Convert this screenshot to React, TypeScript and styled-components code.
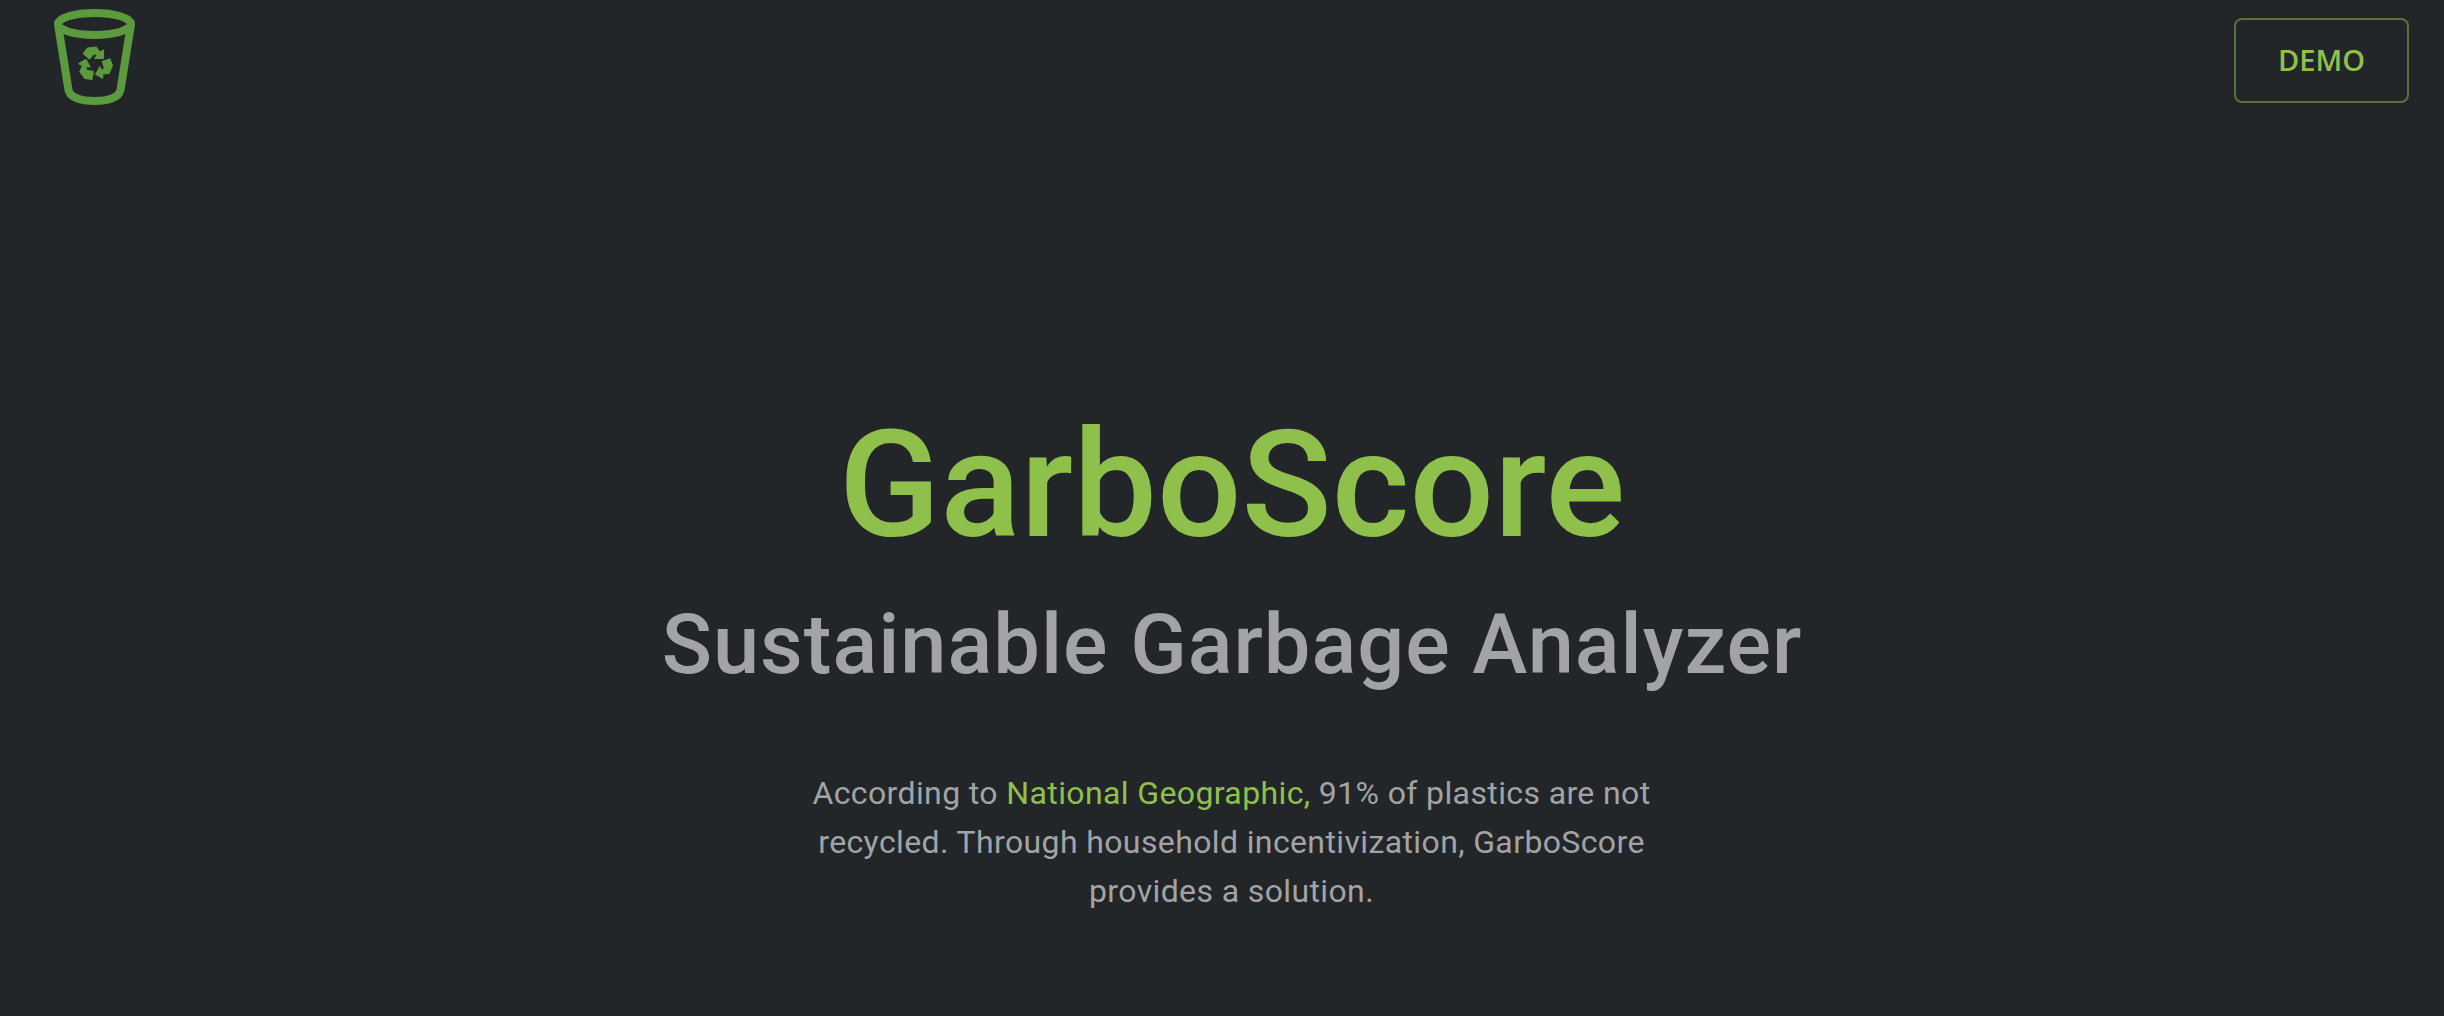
import React from 'react';
import styled, { createGlobalStyle } from 'styled-components';

const GlobalStyle = createGlobalStyle`
  html, body {
    margin: 0;
    padding: 0;
    height: 100%;
    overflow: hidden;
    background: #222629;
  }
`;

const ARROW_ANGLES = [0, 120, 240];

const RecycleBin = () => (
  <BinSvg viewBox="0 0 81 97" aria-hidden="true">
    <g fill="none" stroke="#5c9a3e" strokeWidth="8" strokeLinejoin="round">
      <ellipse cx="40.5" cy="16" rx="36.5" ry="11" />
      <path d="M4 16 L14.5 82 C16 90 28 93 40.5 93 C53 93 65 90 66.5 82 L77 16" />
    </g>
    <g fill="#5c9a3e" stroke="#5c9a3e" strokeWidth="1.3" strokeLinejoin="round" transform="translate(41 56) scale(1.05)">
      {ARROW_ANGLES.map((angle) => (
        <path
          key={angle}
          transform={`rotate(${angle})`}
          d="M-11 -10 L-7 -15 L1 -16 L4.5 -11 L8 -13 L8 -5.5 L0 -5.5 L2.5 -8.5 L-1 -10 L-5.5 -5 Z"
        />
      ))}
    </g>
  </BinSvg>
);

const App = () => (
  <Page>
    <GlobalStyle />
    <Header>
      <RecycleBin />
      <DemoButton>DEMO</DemoButton>
    </Header>
    <Hero>
      <Title>GarboScore</Title>
      <Subtitle>Sustainable Garbage Analyzer</Subtitle>
      <Intro>
        According to <Highlight>National Geographic,</Highlight> 91% of plastics are not recycled. Through household
        incentivization, GarboScore provides a solution.
      </Intro>
    </Hero>
  </Page>
);

const Page = styled.div`
  height: 1016px;
  background: #222629;
  font-family: Roboto, sans-serif;
  display: flex;
  flex-direction: column;
`;

const Header = styled.header`
  display: flex;
  justify-content: space-between;
  align-items: flex-start;
  padding: 8px 35px 0 54px;
`;

const BinSvg = styled.svg`
  width: 81px;
  height: 97px;
  display: block;
`;

const DemoButton = styled.button`
  width: 175px;
  height: 85px;
  margin-top: 10px;
  padding: 0 0 3px;
  background: transparent;
  border: 2px solid #5a7338;
  border-radius: 8px;
  color: #90c04c;
  font-family: 'Open Sans', sans-serif;
  font-size: 29px;
  font-weight: 600;
  letter-spacing: 0;
`;

const Hero = styled.main`
  display: flex;
  flex-direction: column;
  align-items: center;
  padding: 291px 0 0 20px;
  text-align: center;
`;

const Title = styled.h1`
  margin: 0;
  color: #90c04c;
  font-size: 149px;
  font-weight: 500;
  line-height: 1.2;
`;

const Subtitle = styled.h2`
  margin: 20px 0 0;
  color: #a2a3a6;
  font-size: 83px;
  font-weight: 500;
  line-height: 1.2;
  letter-spacing: 1px;
`;

const Intro = styled.p`
  width: 860px;
  margin: 75px 0 0 -1px;
  color: #a2a3a6;
  font-size: 32px;
  font-weight: 400;
  line-height: 49px;
  letter-spacing: 0.38px;
`;

const Highlight = styled.span`
  color: #90c04c;
`;

export default App;
